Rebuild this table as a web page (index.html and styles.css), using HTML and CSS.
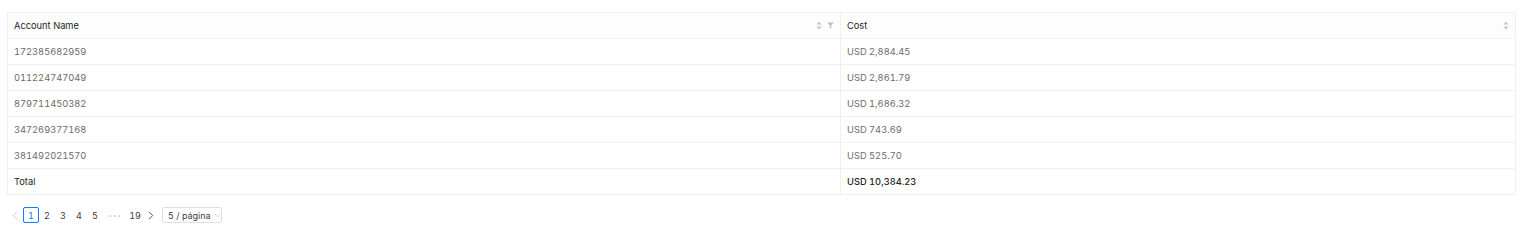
FILE: index.html
```html
<!DOCTYPE html>
<html>
<head>
<meta charset="utf-8">
<link rel="stylesheet" href="styles.css">
</head>
<body>
<div class="page">
  <table class="grid">
    <colgroup><col class="col-name"><col class="col-cost"></colgroup>
    <thead>
      <tr>
        <th>
          <div class="th-inner">
            <span>Account Name</span>
            <span class="th-icons">
              <svg class="sorter" width="6" height="9" viewBox="0 0 6 9"><path d="M3 0.5L5.5 3.5H0.5Z"/><path d="M3 8.5L5.5 5.5H0.5Z"/></svg>
              <svg class="filter" width="7" height="7" viewBox="0 0 7 7"><path d="M0.2 0.5H6.8L4.3 3.6V6.5L2.7 5.7V3.6Z"/></svg>
            </span>
          </div>
        </th>
        <th>
          <div class="th-inner">
            <span>Cost</span>
            <span class="th-icons">
              <svg class="sorter" width="6" height="9" viewBox="0 0 6 9"><path d="M3 0.5L5.5 3.5H0.5Z"/><path d="M3 8.5L5.5 5.5H0.5Z"/></svg>
            </span>
          </div>
        </th>
      </tr>
    </thead>
    <tbody>
      <tr><td>172385682959</td><td>USD 2,884.45</td></tr>
      <tr><td>011224747049</td><td>USD 2,861.79</td></tr>
      <tr><td>879711450382</td><td>USD 1,686.32</td></tr>
      <tr><td>347269377168</td><td>USD 743.69</td></tr>
      <tr><td>381492021570</td><td>USD 525.70</td></tr>
    </tbody>
    <tfoot>
      <tr><td>Total</td><td>USD 10,384.23</td></tr>
    </tfoot>
  </table>

  <ul class="pager">
    <li class="pg-arrow disabled">
      <svg width="6" height="9" viewBox="0 0 6 9"><path d="M5 0.8L1.3 4.5L5 8.2" /></svg>
    </li>
    <li class="pg-item active">1</li>
    <li class="pg-item">2</li>
    <li class="pg-item">3</li>
    <li class="pg-item">4</li>
    <li class="pg-item">5</li>
    <li class="pg-jump">•••</li>
    <li class="pg-item">19</li>
    <li class="pg-arrow">
      <svg width="6" height="9" viewBox="0 0 6 9"><path d="M1 0.8L4.7 4.5L1 8.2" /></svg>
    </li>
    <li class="pg-size">
      <span>5 / página</span>
      <svg width="8" height="5" viewBox="0 0 8 5"><path d="M0.5 0.5L4 4L7.5 0.5"/></svg>
    </li>
  </ul>
</div>
</body>
</html>
```
FILE: styles.css
```css
html, body {
  margin: 0;
  padding: 0;
  background: #ffffff;
}

body {
  font-family: Inter, "Noto Sans", "Liberation Sans", sans-serif;
  font-size: 9.3px;
  font-variant-numeric: tabular-nums;
  color: #595959;
}

.page {
  padding: 12px 4px 0 7px;
}

.grid {
  width: 1509px;
  border-collapse: collapse;
  table-layout: fixed;
  border: 1px solid #f0f0f0;
}

.col-name { width: 833px; }

.grid th,
.grid td {
  height: 25px;
  padding: 0 6px;
  border-bottom: 1px solid #f0f0f0;
  border-right: 1px solid #f0f0f0;
  text-align: left;
  vertical-align: middle;
  white-space: nowrap;
}

.grid th {
  font-weight: 400;
  color: #262626;
  background: #fdfdfd;
}

.grid td {
  color: #6b6b6b;
}

.grid tfoot td {
  color: #262626;
}

.grid tfoot td + td {
  font-weight: 500;
}

.th-inner {
  display: flex;
  align-items: center;
  justify-content: space-between;
}

.th-icons {
  display: flex;
  align-items: center;
  gap: 5px;
}

.th-icons svg {
  display: block;
  fill: #c4c4c4;
}

.pager {
  list-style: none;
  margin: 12px 0 0 0;
  padding: 0;
  display: flex;
  align-items: center;
  height: 16px;
  font-size: 9px;
  white-space: nowrap;
}

.pager li {
  height: 16px;
  display: flex;
  align-items: center;
  justify-content: center;
  box-sizing: border-box;
  color: #404040;
}

.pg-arrow {
  width: 16px;
}

.pg-arrow svg {
  fill: none;
  stroke: #404040;
  stroke-width: 0.9;
}

.pg-arrow.disabled svg {
  stroke: #c8c8c8;
}

.pg-item {
  width: 16px;
}

.pg-item.active {
  border: 1px solid #1677ff;
  border-radius: 2px;
  color: #1677ff;
}

.pg-jump {
  width: 24px;
  color: #c4c4c4 !important;
  font-size: 6px;
  letter-spacing: 1px;
}

.pager .pg-size {
  margin-left: 3px;
  width: 60px;
  border: 1px solid #e0e0e0;
  border-radius: 2px;
  justify-content: flex-start;
  padding-left: 5px;
  gap: 3px;
  color: #404040;
}

.pg-size svg {
  fill: none;
  stroke: #c8c8c8;
  stroke-width: 0.8;
}
```
